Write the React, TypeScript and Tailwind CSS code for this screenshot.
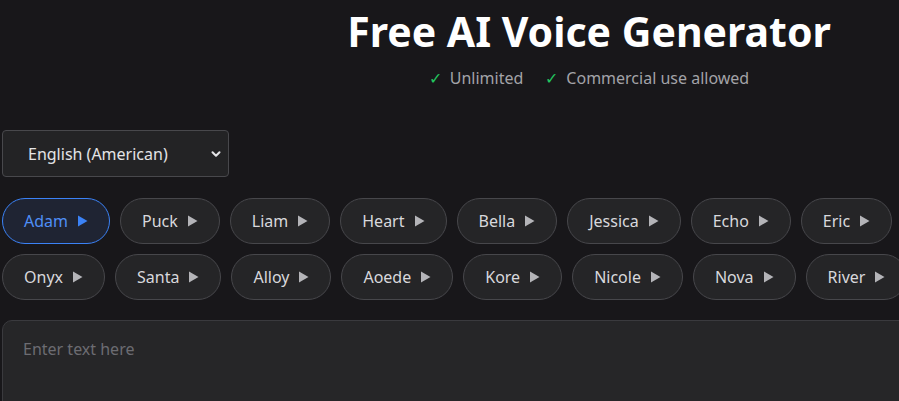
import { ChevronDown } from "lucide-react"

const rowOne = ["Adam", "Puck", "Liam", "Heart", "Bella", "Jessica", "Echo", "Eric", "Fable", "Sarah"]
const rowTwo = ["Onyx", "Santa", "Alloy", "Aoede", "Kore", "Nicole", "Nova", "River", "Sky", "Adam"]

function Play({ active }: { active?: boolean }) {
  return (
    <svg width="10" height="12" viewBox="0 0 10 12" className={active ? "text-[#3b82f6]" : "text-[#b4b4b8]"}>
      <path d="M0 0.5 L9.5 6 L0 11.5 Z" fill="currentColor" />
    </svg>
  )
}

function VoiceChip({ name, active }: { name: string; active?: boolean }) {
  return (
    <button
      className={
        active
          ? "flex h-[46px] shrink-0 items-center gap-[10px] rounded-full border border-[#3b82f6] bg-[#1f2433] px-[21px] text-[16px] text-[#4f8ff7]"
          : "flex h-[46px] shrink-0 items-center gap-[10px] rounded-full border border-[#47474b] bg-[#252527] px-[21px] text-[16px] text-[#d8d8dc]"
      }
    >
      <span>{name}</span>
      <Play active={active} />
    </button>
  )
}

export default function App() {
  return (
    <div className="h-[401px] w-full overflow-hidden bg-[#18171a] font-['Noto_Sans',sans-serif]">
      <div className="w-[1176px] pl-[2px]">
        <header className="flex flex-col items-center pt-[3px]">
          <h1 className="text-[41px] font-bold leading-[56px] text-white">Free AI Voice Generator</h1>
          <div className="mt-[7px] flex items-center gap-[22px] text-[16px] text-[#a3a3a8]">
            <span className="flex items-center gap-[8px]">
              <span className="text-[#22c55e]">✓</span>Unlimited
            </span>
            <span className="flex items-center gap-[8px]">
              <span className="text-[#22c55e]">✓</span>Commercial use allowed
            </span>
          </div>
        </header>

        <div className="relative mt-[40px] w-[227px]">
          <select className="h-[47px] w-full appearance-none rounded-[4px] border border-[#48484c] bg-[#232325] pl-[25px] text-[16px] text-[#e4e4e7]">
            <option>English (American)</option>
          </select>
          <ChevronDown className="pointer-events-none absolute right-[6px] top-[17px] h-[14px] w-[14px] text-[#e4e4e7]" strokeWidth={3.5} />
        </div>

        <div className="mt-[21px] flex flex-col gap-[10px]">
          <div className="flex gap-[10px]">
            {rowOne.map((n, i) => (
              <VoiceChip key={i} name={n} active={i === 0} />
            ))}
          </div>
          <div className="flex gap-[10px]">
            {rowTwo.map((n, i) => (
              <VoiceChip key={i} name={n} />
            ))}
          </div>
        </div>

        <textarea
          placeholder="Enter text here"
          className="mt-[20px] h-[200px] w-full resize-none rounded-[10px] border border-[#3a3a3e] bg-[#262628] px-[20px] py-[16px] text-[16px] text-[#e4e4e7] placeholder:text-[#6c6c72] focus:outline-none"
        />
      </div>
    </div>
  )
}
